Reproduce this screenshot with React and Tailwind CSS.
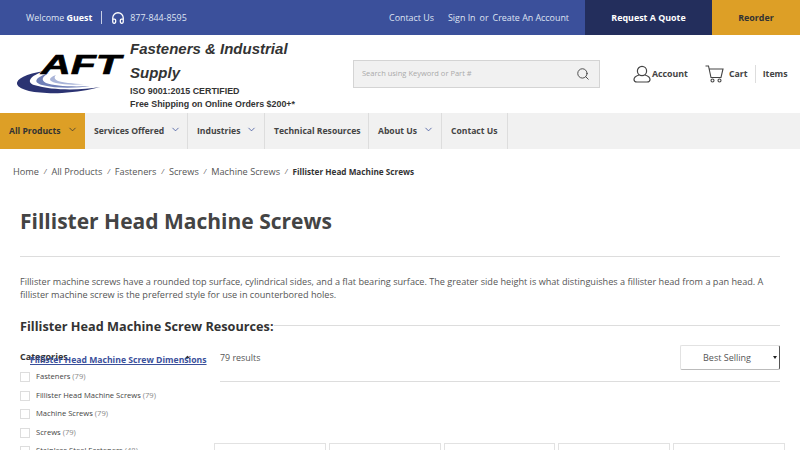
import React from "react";
import { ChevronDown, ChevronUp, Search, Headphones } from "lucide-react";

const navItems = [
  { label: "Services Offered", w: "w-[103px]", arrow: true },
  { label: "Industries", w: "w-[77px]", arrow: true },
  { label: "Technical Resources", w: "w-[104px]" },
  { label: "About Us", w: "w-[73px]", arrow: true },
  { label: "Contact Us", w: "w-[66px]" },
];

const crumbs = ["Home", "All Products", "Fasteners", "Screws", "Machine Screws"];

const categories = [
  ["Fasteners", "(79)"],
  ["Fillister Head Machine Screws", "(79)"],
  ["Machine Screws", "(79)"],
  ["Screws", "(79)"],
  ["Stainless Steel Fasteners", "(48)"],
];

const AftLogo = () => (
  <div className="relative w-[110px] h-[42px] shrink-0 ml-[16px] mt-[19px]">
    <svg width="110" height="42" viewBox="0 0 110 42" className="absolute left-0 top-0">
      <path d="M28 17 C10 20 0 25 1 30 C3 37 24 40 46 39 C60 38 74 36 84 33 C66 36 38 37 18 31 C10 28 14 22 28 17 Z" fill="#2b3372" />
      <path d="M33 19 C20 23 16 28 26 31 C42 35 62 34 74 32 C56 33 38 32 30 29 C24 26 27 22 33 19 Z" fill="#6f7fb8" />
      <path d="M40 21 C32 24 32 27 40 29 C50 31 60 31 68 30 C56 30 46 28 42 27 C38 25 38 23 40 21 Z" fill="#a9b4d8" />
    </svg>
    <span className="absolute left-[25px] top-[-5px] font-['Liberation_Sans',sans-serif] font-bold italic text-[28px] leading-[32px] text-black origin-left scale-x-[1.47] [-webkit-text-stroke:0.6px_black]">
      AFT
    </span>
  </div>
);

const AccountIcon = () => (
  <svg width="18" height="18" viewBox="0 0 18 18" fill="none" stroke="#444" strokeWidth="1.2">
    <circle cx="9" cy="6" r="4.6" />
    <path d="M6 10 C2.5 11 1 12.8 1 14.5 C1 16.2 2.5 17 4 17 H14 C15.5 17 17 16.2 17 14.5 C17 12.8 15.5 11 12 10" />
  </svg>
);

const CartIcon = () => (
  <svg width="19" height="18" viewBox="0 0 19 18" fill="none" stroke="#444" strokeWidth="1.1">
    <path d="M0.5 1 H3.5 L6 12.5 H16 L18 4 H4.4" />
    <circle cx="7.5" cy="15.5" r="1.5" />
    <circle cx="14.5" cy="15.5" r="1.5" />
  </svg>
);

export default function App() {
  return (
    <div className="w-[800px] h-[450px] overflow-hidden bg-white font-['Open_Sans',sans-serif] text-[#444]">
      {/* Top bar */}
      <div className="flex h-[35px] bg-[#3b509b] text-[#dfe4f2] text-[8.9px] items-center">
        <div className="flex items-center pl-[26px]">
          <span>Welcome <b className="text-white">Guest</b></span>
          <span className="ml-[9px] mr-[9px] h-[13px] w-px bg-[#c7cfe6]" />
          <Headphones size={14} strokeWidth={2.2} className="text-white" />
          <span className="ml-[5px]">877-844-8595</span>
        </div>
        <div className="ml-auto flex items-center pr-[16px]">
          <span>Contact Us</span>
          <span className="ml-[14px]">Sign In</span>
          <span className="mx-[4px]">or</span>
          <span>Create An Account</span>
        </div>
        <div className="w-[127px] h-full bg-[#232e5c] text-white font-bold flex items-center justify-center">Request A Quote</div>
        <div className="w-[88px] h-full bg-[#dd9f26] text-[#333] font-bold flex items-center justify-center">Reorder</div>
      </div>

      {/* Logo and search row */}
      <div className="flex h-[78px]">
        <AftLogo />
        <div className="ml-[4px] w-[200px] font-['Liberation_Sans',sans-serif] text-[#333] shrink-0">
          <div className="italic font-bold text-[15px] leading-[24px] mt-[2px] whitespace-nowrap">Fasteners &amp; Industrial</div>
          <div className="italic font-bold text-[15px] leading-[23px] mb-[1px]">Supply</div>
          <div className="font-bold text-[8.9px] leading-[13px] whitespace-nowrap">ISO 9001:2015 CERTIFIED</div>
          <div className="font-bold text-[8.9px] leading-[13px] whitespace-nowrap">Free Shipping on Online Orders $200+*</div>
        </div>
        <div className="ml-[23px] mt-[25px] w-[247px] h-[28px] shrink-0 bg-[#f1f1f1] border border-[#d4d4d4] flex items-center pl-[8px] pr-[9px] text-[7.5px] text-[#aaa]">
          <span>Search using Keyword or Part #</span>
          <Search size={14} strokeWidth={1.6} className="ml-auto text-[#444]" />
        </div>
        <div className="ml-[33px] mt-[30px] h-[18px] flex items-center text-[8.8px] font-bold text-[#444] shrink-0">
          <AccountIcon />
          <span className="ml-[1px] pt-[1px]">Account</span>
          <span className="ml-[17px]"><CartIcon /></span>
          <span className="ml-[5px] pt-[1px]">Cart</span>
          <span className="ml-[7px] mr-[7px] h-[18px] w-px bg-[#ddd]" />
          <span className="pt-[1px]">Items</span>
        </div>
      </div>

      {/* Main nav */}
      <div className="flex h-[36px] bg-[#f1f1f1] text-[8.6px] font-bold text-[#444]">
        <div className="w-[85px] bg-[#dd9f26] text-[#333] flex items-center pl-[9px] gap-[6px] whitespace-nowrap">
          All Products
          <ChevronDown size={11} strokeWidth={1.7} className="-mt-[3px]" />
        </div>
        {navItems.map((item) => (
          <div key={item.label} className={`${item.w} border-r border-[#ddd] flex items-center pl-[9px] gap-[6px] whitespace-nowrap`}>
            {item.label}
            {item.arrow && <ChevronDown size={11} strokeWidth={1.7} className="-mt-[3px] text-[#3b509b]" />}
          </div>
        ))}
      </div>

      {/* Breadcrumb */}
      <div className="flex items-center h-[16px] mt-[15px] pl-[13px] text-[9.2px] text-[#555]">
        {crumbs.map((c) => (
          <React.Fragment key={c}>
            <span>{c}</span>
            <span className="mx-[5px] text-[7px] italic">/</span>
          </React.Fragment>
        ))}
        <b className="text-[8.2px] text-[#333]">Fillister Head Machine Screws</b>
      </div>

      {/* Page content */}
      <div className="px-[20px]">
        <h1 className="mt-[26px] text-[21px] leading-[30px] font-bold text-[#444]">Fillister Head Machine Screws</h1>
        <div className="mt-[20px] border-t border-[#ddd]" />
        <p className="mt-[18px] text-[9.15px] leading-[13px] text-[#555]">
          Fillister machine screws have a rounded top surface, cylindrical sides, and a flat bearing surface. The greater side height is what distinguishes a fillister head from a pan head. A fillister machine screw is the preferred style for use in counterbored holes.
        </p>

        {/* Resources heading with rule running beside it */}
        <div className="relative mt-[16px] flex items-center h-[20px]">
          <h2 className="text-[12.7px] font-bold text-[#333] whitespace-nowrap">Fillister Head Machine Screw Resources:</h2>
          <div className="flex-1 border-t border-[#ddd] -mt-[4px]" />
          <a className="absolute left-[10px] top-[37px] text-[8.65px] leading-[13px] font-bold text-[#3b509b] underline whitespace-nowrap">
            Fillister Head Machine Screw Dimensions
          </a>
        </div>

        <div className="flex mt-[8px]">
          {/* Sidebar filters */}
          <div className="w-[200px] shrink-0 pt-[5px]">
            <div className="flex items-center h-[14px] text-[9px] font-bold text-[#333] w-[172px] justify-between">
              Categories
              <ChevronUp size={9} strokeWidth={3} />
            </div>
            <div className="mt-[8px] flex flex-col gap-[8.5px]">
              {categories.map(([name, count]) => (
                <div key={name} className="flex items-center h-[10px] text-[7.6px] text-[#444] whitespace-nowrap">
                  <span className="w-[10px] h-[10px] border border-[#ddd] mr-[6px]" />
                  {name}&nbsp;<span className="text-[#888]">{count}</span>
                </div>
              ))}
            </div>
          </div>

          {/* Results */}
          <div className="flex-1 min-w-0">
            <div className="flex items-center pb-[11px] border-b border-[#ddd]">
              <span className="text-[8.9px] text-[#555]">79 results</span>
              <div className="ml-auto relative w-[100px] h-[25px] border border-[#e2e2e2] border-r-[#555] border-b-[#bbb] rounded-[2px] flex items-center justify-center text-[9px] text-[#555]">
                <span className="-ml-[6px]">Best Selling</span>
                <span className="absolute right-[2px] top-[10px] w-0 h-0 border-x-[2px] border-x-transparent border-t-[3px] border-t-[#222]" />
              </div>
            </div>
            <div className="flex gap-[3px] -ml-[6px] -mr-[5px] mt-[61px]">
              {[0, 1, 2, 3, 4].map((i) => (
                <div key={i} className="flex-1 h-[60px] border border-[#e2e2e2]" />
              ))}
            </div>
          </div>
        </div>
      </div>
    </div>
  );
}
